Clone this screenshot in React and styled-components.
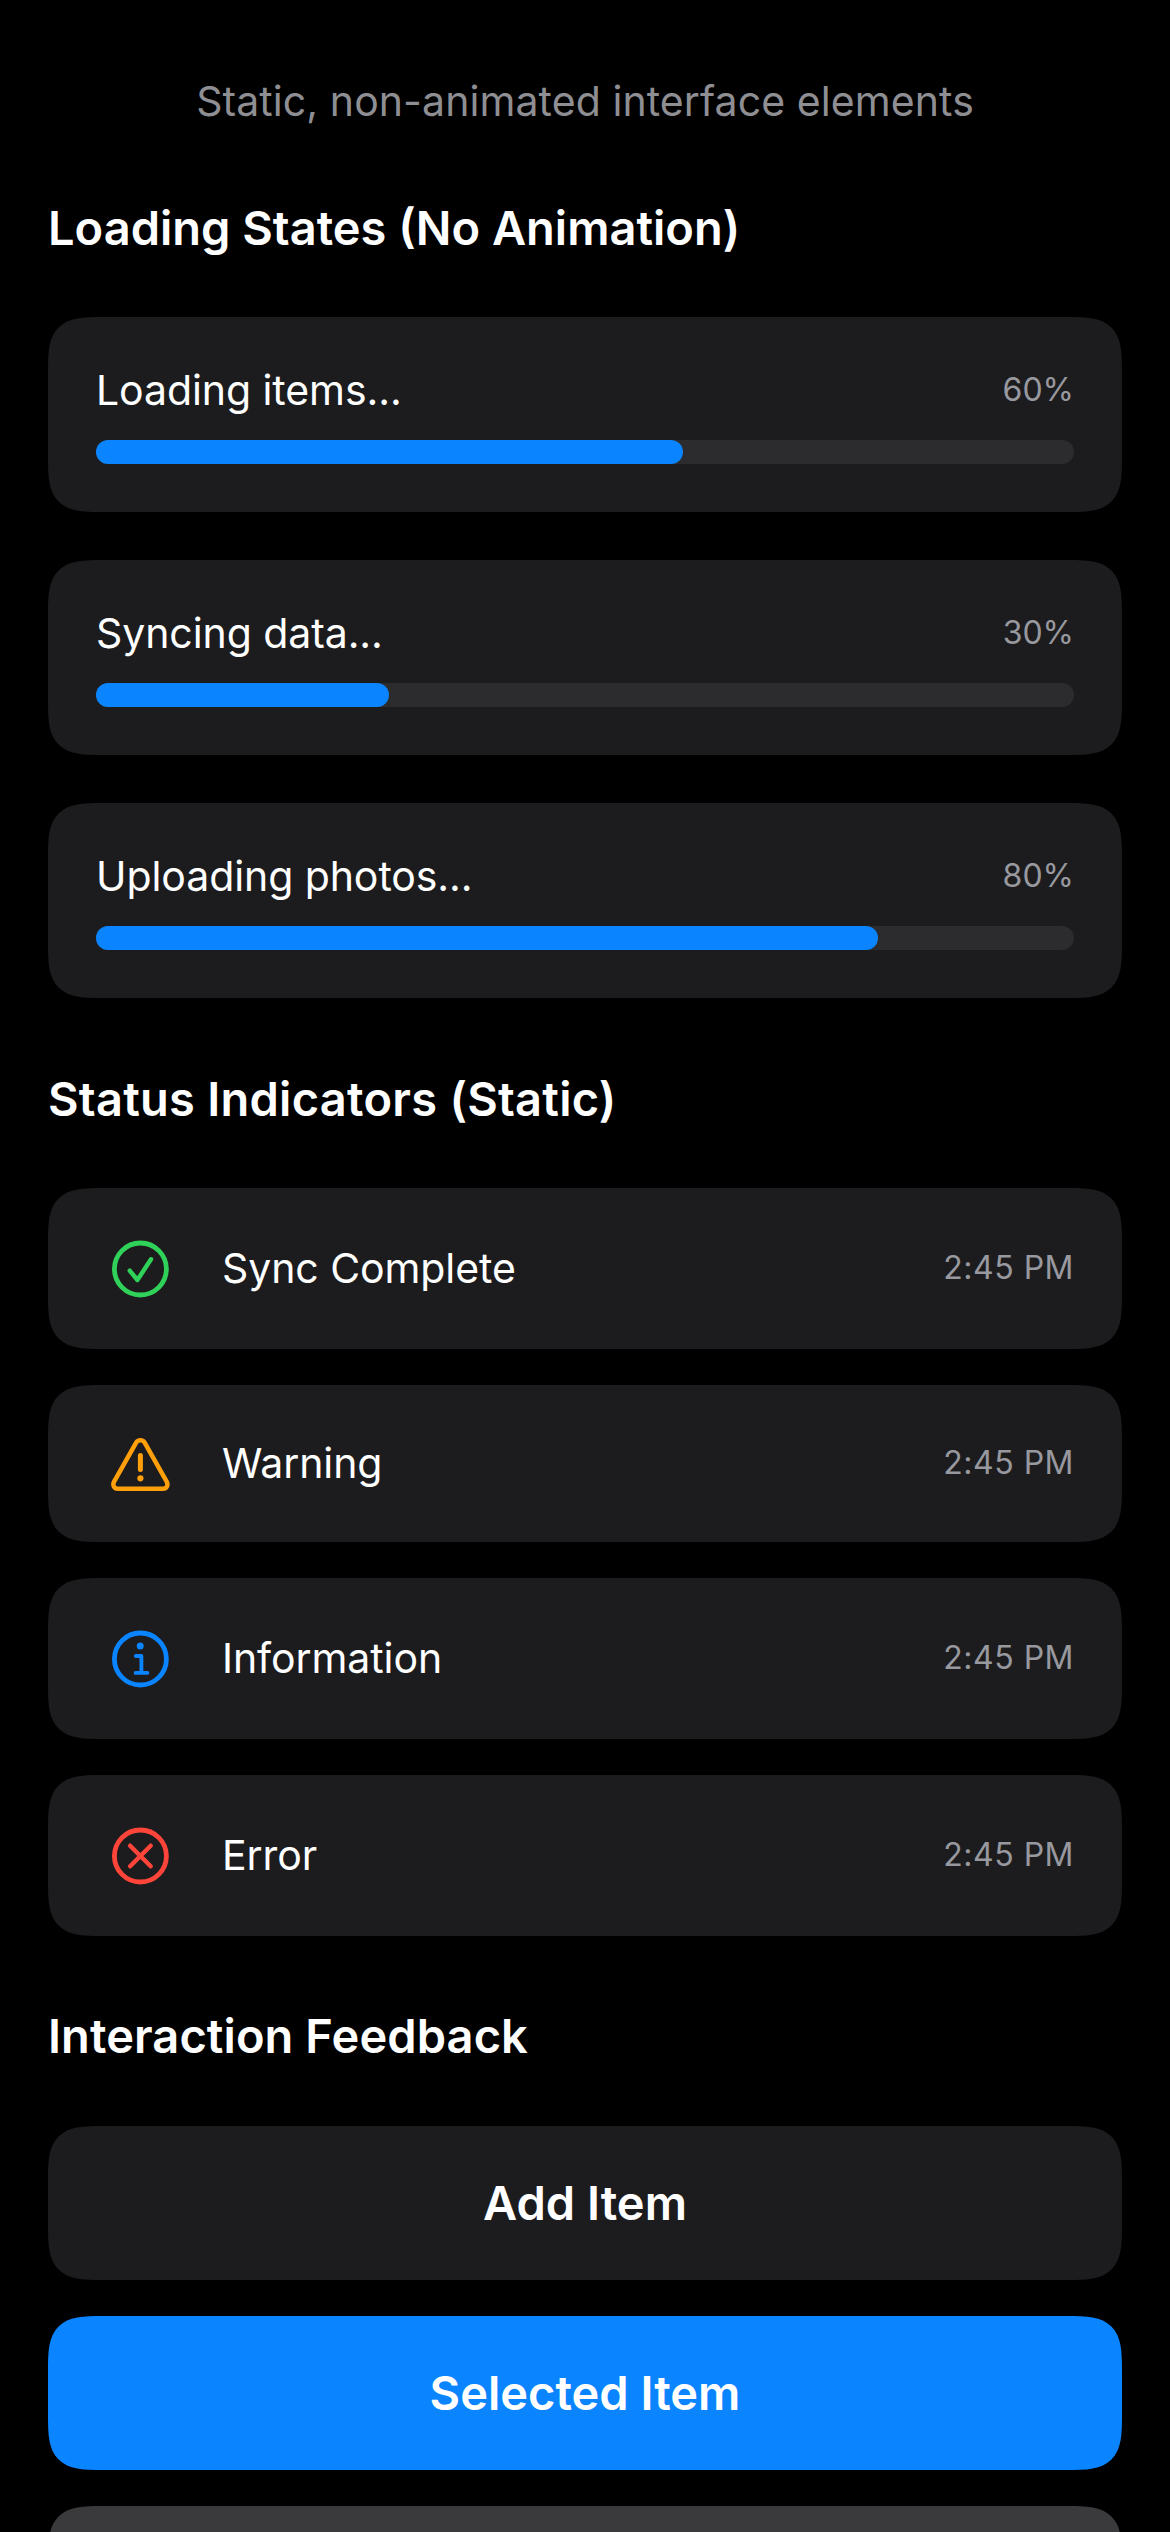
import React from "react";
import styled, { createGlobalStyle } from "styled-components";

const GlobalStyle = createGlobalStyle`
  *, *::before, *::after { box-sizing: border-box; }
  html, body { margin: 0; background: #000; }
  body { font-family: Inter, Roboto, sans-serif; color: #fff; -webkit-font-smoothing: antialiased; }
`;

const Screen = styled.main`
  display: flex;
  flex-direction: column;
  gap: 72px;
  height: 2532px;
  padding: 76px 48px 0;
  overflow: hidden;
  background: #000;
`;

const Subtitle = styled.p`
  margin: 0 0 1px;
  font-size: 41px;
  line-height: 50px;
  letter-spacing: 0.08px;
  text-align: center;
  color: #8e8e93;
`;

const Section = styled.section`
  display: flex;
  flex-direction: column;
  flex: none;
`;

const Heading = styled.h2`
  margin: ${(p) => (p.$raised ? "-1px 0 61px" : "0 0 60px")};
  font-size: 47px;
  line-height: 58px;
  font-weight: 600;
  letter-spacing: ${(p) => p.$tracking ?? 0}px;
`;

const Stack = styled.div`
  display: flex;
  flex-direction: column;
  gap: ${(p) => p.$gap}px;
`;

const Card = styled.div`
  border-radius: 36px;
  background: #1c1c1e;
  @supports (corner-shape: superellipse(1.7)) {
    border-radius: 55px;
    corner-shape: superellipse(1.7);
  }
`;

const ProgressCard = styled(Card)`
  display: flex;
  flex-direction: column;
  gap: 24px;
  padding: 48px;
`;

const ProgressHeader = styled.div`
  display: flex;
  align-items: center;
  justify-content: space-between;
  height: 51px;
`;

const Label = styled.span`
  font-size: 41px;
  line-height: 51px;
  letter-spacing: -0.08px;
`;

const Caption = styled.span`
  padding-bottom: 2px;
  font-size: 32px;
  line-height: 40px;
  letter-spacing: ${(p) => p.$tracking ?? 0}px;
  color: #98989f;
`;

const Track = styled.div`
  height: 24px;
  border-radius: 12px;
  background: #2c2c2e;
`;

const Fill = styled.div`
  width: ${(p) => p.$value}%;
  height: 100%;
  border-radius: 12px;
  background: #0a84ff;
`;

const StatusCard = styled(Card)`
  display: flex;
  align-items: center;
  height: ${(p) => p.$height}px;
  padding: 0 48px;
`;

const IconSlot = styled.div`
  display: flex;
  justify-content: center;
  flex: none;
  width: 88px;
  margin-right: 38px;
`;

const Icon = styled.svg.attrs({ width: 60, height: 60, viewBox: "-0.4 0 60 60", fill: "none" })`
  display: block;
  flex: none;
  color: ${(p) => p.$color};
  stroke: currentColor;
  stroke-linecap: round;
  stroke-linejoin: round;
`;

const StatusLabel = styled(Label)`
  flex: 1;
`;

const ActionButton = styled(Card).attrs({ as: "button", type: "button" })`
  display: block;
  height: 154px;
  padding: 0;
  border: 0;
  background: ${(p) => p.$background};
  color: #fff;
  font: 600 47px/58px Inter, Roboto, sans-serif;
`;

const Ring = () => <circle cx="30" cy="30" r="26" strokeWidth="4.8" />;

const CheckIcon = () => (
  <Icon $color="#30d158">
    <Ring />
    <path d="M19.3 31.6L27 41L40.6 20.2" strokeWidth="4.4" />
  </Icon>
);

const WarningIcon = () => (
  <Icon $color="#ff9f0a">
    <path
      d="M25.6 8.8L3.7 47.6C1.9 51 3.6 54.8 7.4 54.8H52.6C56.4 54.8 58.1 51 56.3 47.6L34.4 8.8C32.4 5.4 27.6 5.4 25.6 8.8Z"
      strokeWidth="4.5"
    />
    <path d="M30 21.5V35.6" strokeWidth="5" />
    <circle cx="30" cy="44.3" r="3.1" fill="currentColor" stroke="none" />
  </Icon>
);

const InfoIcon = () => (
  <Icon $color="#0a84ff">
    <Ring />
    <circle cx="29.8" cy="16.9" r="3.5" fill="currentColor" stroke="none" />
    <path d="M25.4 27H31V43.9M25.2 43.9H37" strokeWidth="3.8" />
  </Icon>
);

const ErrorIcon = () => (
  <Icon $color="#ff453a">
    <Ring />
    <path d="M19.7 19.7L40.3 40.3M40.3 19.7L19.7 40.3" strokeWidth="4.4" />
  </Icon>
);

const loads = [
  { label: "Loading items...", value: 60 },
  { label: "Syncing data...", value: 30 },
  { label: "Uploading photos...", value: 80 },
];

const statuses = [
  { label: "Sync Complete", icon: CheckIcon, height: 161 },
  { label: "Warning", icon: WarningIcon, height: 157 },
  { label: "Information", icon: InfoIcon, height: 161 },
  { label: "Error", icon: ErrorIcon, height: 161 },
];

export default function App() {
  return (
    <>
      <GlobalStyle />
      <Screen>
        <Subtitle>Static, non-animated interface elements</Subtitle>
        <Section>
          <Heading>Loading States (No Animation)</Heading>
          <Stack $gap={48}>
            {loads.map(({ label, value }) => (
              <ProgressCard key={label}>
                <ProgressHeader>
                  <Label>{label}</Label>
                  <Caption>{value}%</Caption>
                </ProgressHeader>
                <Track>
                  <Fill $value={value} />
                </Track>
              </ProgressCard>
            ))}
          </Stack>
        </Section>
        <Section>
          <Heading $tracking={0.26}>Status Indicators (Static)</Heading>
          <Stack $gap={36}>
            {statuses.map(({ label, icon: StatusIcon, height }) => (
              <StatusCard key={label} $height={height}>
                <IconSlot>
                  <StatusIcon />
                </IconSlot>
                <StatusLabel>{label}</StatusLabel>
                <Caption $tracking={0.5}>2:45 PM</Caption>
              </StatusCard>
            ))}
          </Stack>
        </Section>
        <Section>
          <Heading $raised $tracking={0.08}>Interaction Feedback</Heading>
          <Stack $gap={36}>
            <ActionButton $background="#1c1c1e">Add Item</ActionButton>
            <ActionButton $background="#0a84ff">Selected Item</ActionButton>
            <ActionButton $background="#3a3a3c" />
          </Stack>
        </Section>
      </Screen>
    </>
  );
}
